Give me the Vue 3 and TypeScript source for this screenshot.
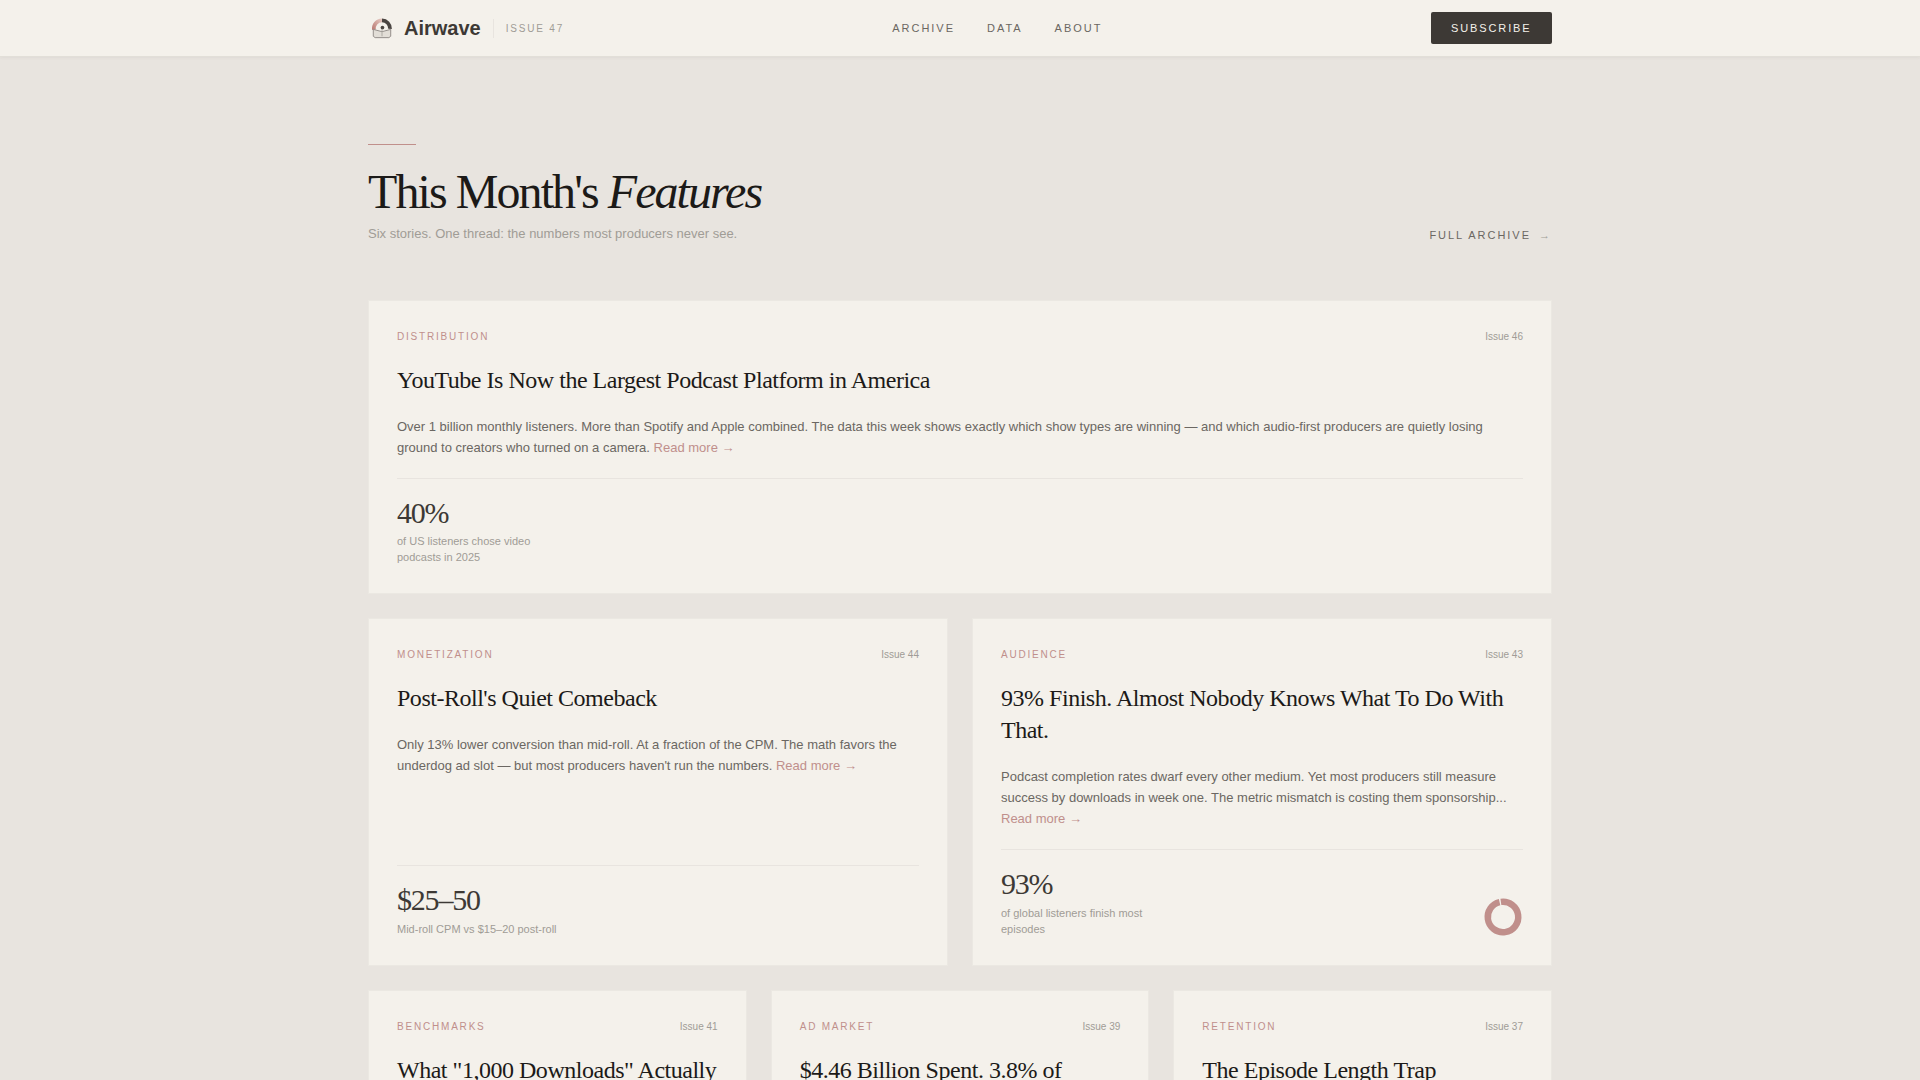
<script setup lang="ts">
interface Stat {
  value: string;
  label: string;
  ring?: boolean;
}

interface Story {
  tag: string;
  issue: string;
  title: string;
  body: string;
  stat?: Stat;
}

const navLinks = ["Archive", "Data", "About"];

const lead: Story = {
  tag: "Distribution",
  issue: "Issue 46",
  title: "YouTube Is Now the Largest Podcast Platform in America",
  body: "Over 1 billion monthly listeners. More than Spotify and Apple combined. The data this week shows exactly which show types are winning — and which audio-first producers are quietly losing ground to creators who turned on a camera.",
  stat: { value: "40%", label: "of US listeners chose video podcasts in 2025" },
};

const pair: Story[] = [
  {
    tag: "Monetization",
    issue: "Issue 44",
    title: "Post-Roll's Quiet Comeback",
    body: "Only 13% lower conversion than mid-roll. At a fraction of the CPM. The math favors the underdog ad slot — but most producers haven't run the numbers.",
    stat: { value: "$25–50", label: "Mid-roll CPM vs $15–20 post-roll" },
  },
  {
    tag: "Audience",
    issue: "Issue 43",
    title: "93% Finish. Almost Nobody Knows What To Do With That.",
    body: "Podcast completion rates dwarf every other medium. Yet most producers still measure success by downloads in week one. The metric mismatch is costing them sponsorship...",
    stat: { value: "93%", label: "of global listeners finish most episodes", ring: true },
  },
];

const trio: Story[] = [
  {
    tag: "Benchmarks",
    issue: "Issue 41",
    title: 'What "1,000 Downloads" Actually Means',
    body: "",
  },
  {
    tag: "Ad Market",
    issue: "Issue 39",
    title: "$4.46 Billion Spent. 3.8% of Listeners Noticed.",
    body: "",
  },
  {
    tag: "Retention",
    issue: "Issue 37",
    title: "The Episode Length Trap",
    body: "",
  },
];

const ringRadius = 15.25;
const ringLength = 2 * Math.PI * ringRadius;
// small gap just left of twelve o'clock
const ringDash = `${ringLength - 2} ${ringLength}`;
</script>

<template>
  <div class="page">
    <header class="topbar">
      <div class="topbar-inner">
        <div class="brand">
          <svg class="logo" width="22" height="22" viewBox="0 0 24 24" aria-hidden="true">
            <defs>
              <linearGradient id="logo-arc" x1="0" y1="1" x2="1" y2="0">
                <stop offset="0" stop-color="#bd7f78" />
                <stop offset="1" stop-color="#e3c6be" />
              </linearGradient>
            </defs>
            <path d="M3.2 14a9 9 0 0 1 8.8-10.4" fill="none" stroke="url(#logo-arc)" stroke-width="4" />
            <path d="M12 3.6a9 9 0 0 1 8.8 9.4" fill="none" stroke="#4a4541" stroke-width="4" />
            <path d="M2.5 13.5l9.5 2.5 9.5-2.5v7.5l-2 1.5h-15l-2-1.5z" fill="#e2ded7" stroke="#8d8883" stroke-width="1" />
            <circle cx="12.5" cy="11.5" r="2" fill="#4a4541" />
            <path d="M12 13v8" stroke="#aaa6a0" stroke-width="1" />
          </svg>
          <span class="brand-name">Airwave</span>
          <span class="brand-issue">Issue 47</span>
        </div>
        <nav class="nav">
          <a v-for="link in navLinks" :key="link" class="nav-link">{{ link }}</a>
        </nav>
        <button type="button" class="subscribe">Subscribe</button>
      </div>
    </header>

    <main class="content">
      <section class="intro">
        <div>
          <div class="rule"></div>
          <h1 class="headline">This Month's <em>Features</em></h1>
          <p class="subhead">Six stories. One thread: the numbers most producers never see.</p>
        </div>
        <a class="archive-link">Full Archive <span class="archive-arrow">→</span></a>
      </section>

      <article class="card">
        <div class="card-top">
          <span class="tag">{{ lead.tag }}</span>
          <span class="issue">{{ lead.issue }}</span>
        </div>
        <h2 class="title">{{ lead.title }}</h2>
        <p class="body">{{ lead.body }} <a class="more">Read more →</a></p>
        <div class="stat">
          <div>
            <div class="stat-value">{{ lead.stat?.value }}</div>
            <div class="stat-label">{{ lead.stat?.label }}</div>
          </div>
        </div>
      </article>

      <div class="row two">
        <article v-for="story in pair" :key="story.issue" class="card">
          <div class="card-top">
            <span class="tag">{{ story.tag }}</span>
            <span class="issue">{{ story.issue }}</span>
          </div>
          <h2 class="title">{{ story.title }}</h2>
          <p class="body">{{ story.body }} <a class="more">Read more →</a></p>
          <div class="stat">
            <div>
              <div class="stat-value">{{ story.stat?.value }}</div>
              <div class="stat-label">{{ story.stat?.label }}</div>
            </div>
            <svg v-if="story.stat?.ring" class="ring" width="40" height="40" viewBox="0 0 40 40">
              <circle
                cx="20"
                cy="20"
                :r="ringRadius"
                fill="none"
                stroke="#c08f8b"
                stroke-width="6.5"
                :stroke-dasharray="ringDash"
                transform="rotate(-98 20 20)"
              />
            </svg>
          </div>
        </article>
      </div>

      <div class="row three">
        <article v-for="story in trio" :key="story.issue" class="card">
          <div class="card-top">
            <span class="tag">{{ story.tag }}</span>
            <span class="issue">{{ story.issue }}</span>
          </div>
          <h2 class="title">{{ story.title }}</h2>
        </article>
      </div>
    </main>
  </div>
</template>

<style>
html,
body {
  background: #e8e4df;
}
</style>

<style scoped>
.page {
  min-height: 100vh;
  background: #e8e4df;
  font-family: "Liberation Sans", Arial, sans-serif;
}

.topbar {
  height: 57px;
  background: #f4f1eb;
  border-bottom: 1px solid #e2dfd8;
  box-shadow: 0 1px 3px rgba(60, 50, 40, 0.05);
  box-sizing: border-box;
}

.topbar-inner {
  max-width: 1184px;
  height: 100%;
  margin: 0 auto;
  display: flex;
  justify-content: space-between;
  align-items: center;
}

.brand {
  display: flex;
  align-items: center;
}

.logo {
  margin-left: 3px;
  margin-right: 11px;
}

.brand-name {
  font-size: 20px;
  font-weight: 700;
  color: #3d3935;
}

.brand-issue {
  margin-left: 12px;
  padding-left: 12px;
  border-left: 1px solid #e8e4df;
  padding-top: 1px;
  font-size: 10px;
  line-height: 18px;
  letter-spacing: 0.18em;
  text-transform: uppercase;
  color: #a09c96;
}

.nav {
  display: flex;
  gap: 32px;
}

.nav-link {
  font-size: 11px;
  letter-spacing: 0.18em;
  text-transform: uppercase;
  color: #6b6762;
}

.subscribe {
  height: 32px;
  padding: 0 20.5px;
  border: none;
  border-radius: 2px;
  background: #3d3935;
  color: #f4f1eb;
  font-family: inherit;
  font-size: 11px;
  letter-spacing: 0.17em;
  text-transform: uppercase;
}

.content {
  max-width: 1184px;
  margin: 0 auto;
  padding-top: 87px;
}

.intro {
  display: flex;
  justify-content: space-between;
  align-items: flex-end;
  margin-bottom: 55px;
}

.rule {
  width: 48px;
  height: 1px;
  background: #c08f8b;
  margin-bottom: 21px;
}

.headline {
  margin: 0 0 5px;
  font-family: "Liberation Serif", "Times New Roman", serif;
  font-size: 48px;
  font-weight: 400;
  line-height: 1.1;
  letter-spacing: -0.04em;
  color: #1c1a18;
}

.headline em {
  font-style: italic;
}

.subhead {
  margin: 0 0 1px;
  font-size: 13px;
  line-height: 20px;
  color: #a09c96;
}

.archive-link {
  font-size: 11px;
  line-height: 20px;
  letter-spacing: 0.18em;
  text-transform: uppercase;
  color: #6b6762;
}

.archive-arrow {
  margin-left: 3px;
  color: #a09c96;
}

.card {
  box-sizing: border-box;
  display: flex;
  flex-direction: column;
  padding: 28px;
  background: #f4f1eb;
  border: 1px solid #ebe8e2;
}

.card-top {
  display: flex;
  justify-content: space-between;
  align-items: center;
  margin-bottom: 19.2px;
}

.tag {
  font-size: 10px;
  line-height: 16px;
  letter-spacing: 0.18em;
  text-transform: uppercase;
  color: #c08f8b;
}

.issue {
  font-size: 10px;
  line-height: 16px;
  color: #a09c96;
}

.title {
  margin: 0 0 20px;
  font-family: "Liberation Serif", "Times New Roman", serif;
  font-size: 24px;
  font-weight: 400;
  line-height: 32px;
  letter-spacing: -0.02em;
  color: #1c1a18;
}

.body {
  margin: 0 0 20px;
  font-size: 13px;
  line-height: 21px;
  color: #6b6762;
}

.more {
  color: #c08f8b;
}

.stat {
  margin-top: auto;
  padding-top: 19px;
  border-top: 1px solid #e8e4df;
  display: flex;
  justify-content: space-between;
  align-items: flex-end;
}

.stat-value {
  font-family: "Liberation Serif", "Times New Roman", serif;
  font-size: 30px;
  line-height: 1;
  letter-spacing: -0.04em;
  color: #3d3935;
}

.stat-label {
  margin-top: 5.2px;
  max-width: 160px;
  font-size: 11px;
  line-height: 16px;
  color: #a09c96;
}

.row {
  display: grid;
  gap: 24px;
  margin-top: 24px;
}

.two {
  grid-template-columns: 1fr 1fr;
}

.three {
  grid-template-columns: 1fr 1fr 1fr;
}

.three .card {
  min-height: 200px;
}
</style>
